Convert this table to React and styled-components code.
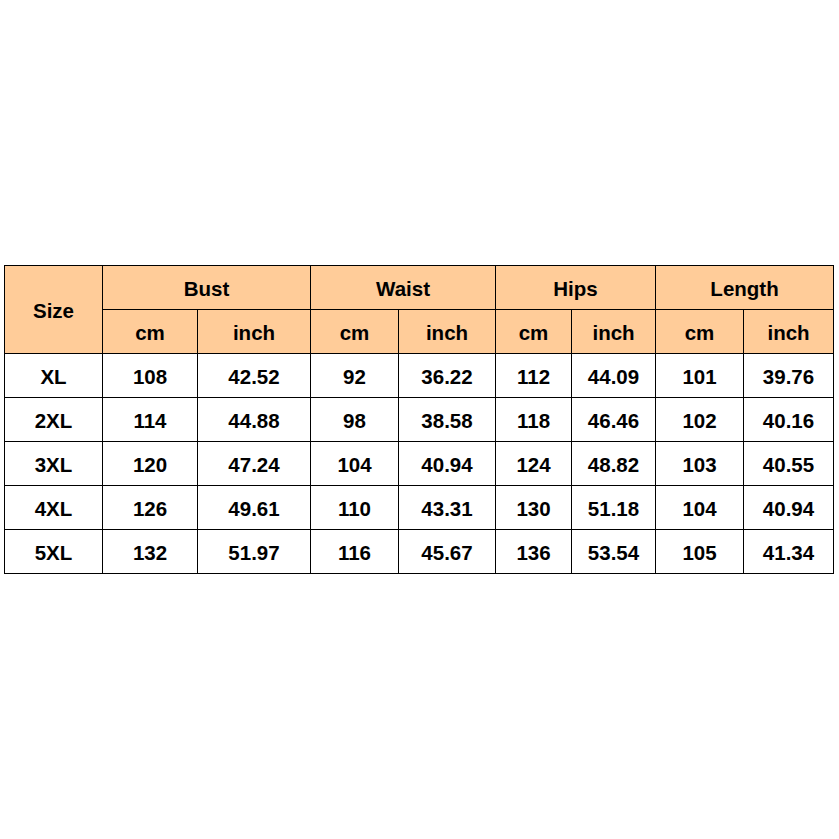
import React from 'react';
import styled, { createGlobalStyle } from 'styled-components';

const rows = [
  ['XL', '108', '42.52', '92', '36.22', '112', '44.09', '101', '39.76'],
  ['2XL', '114', '44.88', '98', '38.58', '118', '46.46', '102', '40.16'],
  ['3XL', '120', '47.24', '104', '40.94', '124', '48.82', '103', '40.55'],
  ['4XL', '126', '49.61', '110', '43.31', '130', '51.18', '104', '40.94'],
  ['5XL', '132', '51.97', '116', '45.67', '136', '53.54', '105', '41.34'],
];

const groups = ['Bust', 'Waist', 'Hips', 'Length'];
const widths = [98, 95, 113, 88, 97, 76, 84, 88, 90];

const GlobalStyle = createGlobalStyle`
  html, body {
    margin: 0;
    padding: 0;
    background: #ffffff;
  }
`;

const Page = styled.div`
  width: 839px;
  height: 839px;
  box-sizing: border-box;
  padding: 265px 0 0 4px;
  font-family: "Liberation Sans", Arial, sans-serif;
`;

const Table = styled.table`
  border-collapse: collapse;
  table-layout: fixed;
  width: 830px;
`;

const Cell = styled.td`
  border: 1px solid #000;
  height: 40px;
  padding: 3px 0 0;
  text-align: center;
  vertical-align: middle;
  font-size: 20.5px;
  line-height: 24px;
  font-weight: bold;
  color: #000;
  background: ${(props) => (props.head ? '#ffcc99' : '#ffffff')};
`;

function App() {
  return (
    <Page>
      <GlobalStyle />
      <Table>
        <colgroup>
          {widths.map((w, i) => (
            <col key={i} style={{ width: w }} />
          ))}
        </colgroup>
        <thead>
          <tr>
            <Cell as="th" head rowSpan={2}>Size</Cell>
            {groups.map((g) => (
              <Cell as="th" head colSpan={2} key={g}>{g}</Cell>
            ))}
          </tr>
          <tr>
            {groups.map((g) => (
              <React.Fragment key={g}>
                <Cell as="th" head>cm</Cell>
                <Cell as="th" head>inch</Cell>
              </React.Fragment>
            ))}
          </tr>
        </thead>
        <tbody>
          {rows.map((row) => (
            <tr key={row[0]}>
              {row.map((v, i) => (
                <Cell key={i}>{v}</Cell>
              ))}
            </tr>
          ))}
        </tbody>
      </Table>
    </Page>
  );
}

export default App;
